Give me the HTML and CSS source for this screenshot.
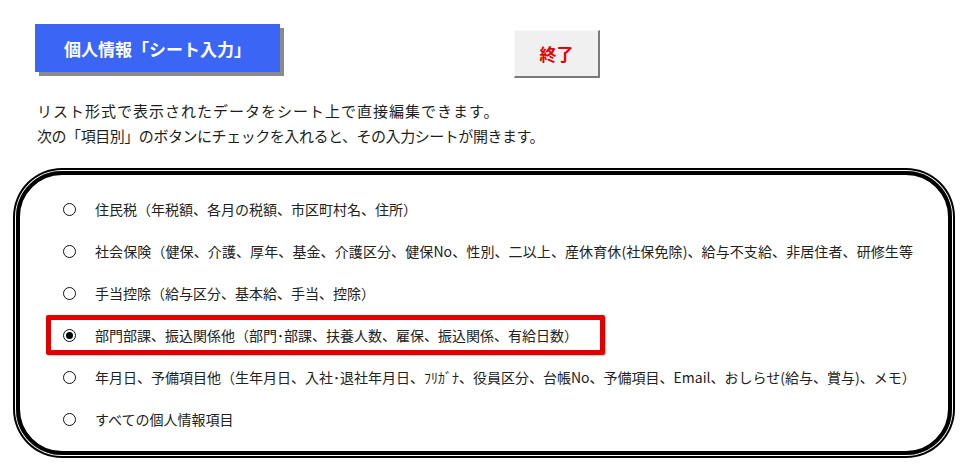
FILE: index.html
```html
<!DOCTYPE html>
<html lang="ja">
<head>
<meta charset="utf-8">
<title>個人情報「シート入力」</title>
<link rel="stylesheet" href="styles.css">
</head>
<body>
<div class="page">
  <div class="header">
    <div class="title">個人情報「シート入力」</div>
    <div class="quit">終了</div>
  </div>
  <div class="desc">
    <p class="l1">リスト形式で表示されたデータをシート上で直接編集できます。</p>
    <p class="l2">次の「項目別」のボタンにチェックを入れると、その入力シートが開きます。</p>
  </div>
  <div class="frame">
    <div class="opt"><span class="radio"></span><span class="label">住民税（年税額、各月の税額、市区町村名、住所）</span></div>
    <div class="opt"><span class="radio"></span><span class="label wide">社会保険（健保、介護、厚年、基金、介護区分、健保No、性別、二以上、産休育休(社保免除)、給与不支給、非居住者、研修生等</span></div>
    <div class="opt"><span class="radio"></span><span class="label">手当控除（給与区分、基本給、手当、控除）</span></div>
    <div class="opt sel"><span class="radio on"></span><span class="label">部門部課、振込関係他（部門･部課、扶養人数、雇保、振込関係、有給日数）</span></div>
    <div class="opt"><span class="radio"></span><span class="label">年月日、予備項目他（生年月日、入社･退社年月日、ﾌﾘｶﾞﾅ、役員区分、台帳No、予備項目、Email、おしらせ(給与、賞与)、メモ）</span></div>
    <div class="opt"><span class="radio"></span><span class="label">すべての個人情報項目</span></div>
  </div>
</div>
</body>
</html>
```
FILE: styles.css
```css
*, *::before, *::after {
  box-sizing: border-box;
}
html, body {
  margin: 0;
  padding: 0;
  background: #ffffff;
}
body {
  font-family: "Noto Sans CJK JP", "Noto Sans", sans-serif;
  color: #1e1e1e;
  width: 968px;
  height: 475px;
  overflow: hidden;
}
.page {
  padding-top: 24px;
}
.header {
  display: flex;
  align-items: flex-start;
  margin-left: 35px;
}
.title {
  width: 245px;
  height: 48px;
  background: #3b66f5;
  color: #ffffff;
  font-weight: bold;
  font-size: 17px;
  display: flex;
  align-items: center;
  justify-content: center;
  box-shadow: 4px 4px 0 #8a8a8a;
}
.quit {
  margin-left: 234px;
  margin-top: 6px;
  width: 86px;
  height: 48px;
  background: #f0f0f0;
  border-top: 1px solid #f8f8f8;
  border-left: 1px solid #f8f8f8;
  border-right: 2px solid #7a7a7a;
  border-bottom: 2px solid #7a7a7a;
  color: #e60000;
  font-weight: bold;
  font-size: 17px;
  display: flex;
  align-items: center;
  justify-content: center;
}
.desc {
  margin: 20px 0 0 37px;
  font-size: 15px;
  line-height: 25px;
}
.desc p {
  margin: 0;
  white-space: nowrap;
}
.desc .l1 {
  letter-spacing: 1px;
}
.desc .l2 {
  letter-spacing: -0.45px;
}
.frame {
  margin: 23px 0 0 16px;
  width: 936px;
  height: 284px;
  border: 4px solid #000000;
  border-radius: 46px;
  box-shadow: 0 0 0 1px #ffffff, 0 0 0 3px #000000;
  padding: 13px 0 0 43px;
  display: flex;
  flex-direction: column;
}
.opt {
  height: 42px;
  display: flex;
  align-items: center;
  font-size: 14px;
  color: #222222;
  white-space: nowrap;
}
.label.wide {
  letter-spacing: 0.1px;
}
.radio {
  width: 13px;
  height: 13px;
  border: 1px solid #111111;
  border-radius: 50%;
  flex: none;
  display: flex;
  align-items: center;
  justify-content: center;
  margin-right: 19px;
}
.radio.on::after {
  content: "";
  width: 7px;
  height: 7px;
  border-radius: 50%;
  background: #000000;
}
.opt.sel {
  width: 559px;
  height: 40px;
  margin: 1px 0 1px -17px;
  padding-left: 12px;
  border: 5px solid #e00000;
  border-radius: 2px;
  box-shadow: 1px 1px 1px rgba(0,0,0,0.25);
}
```
